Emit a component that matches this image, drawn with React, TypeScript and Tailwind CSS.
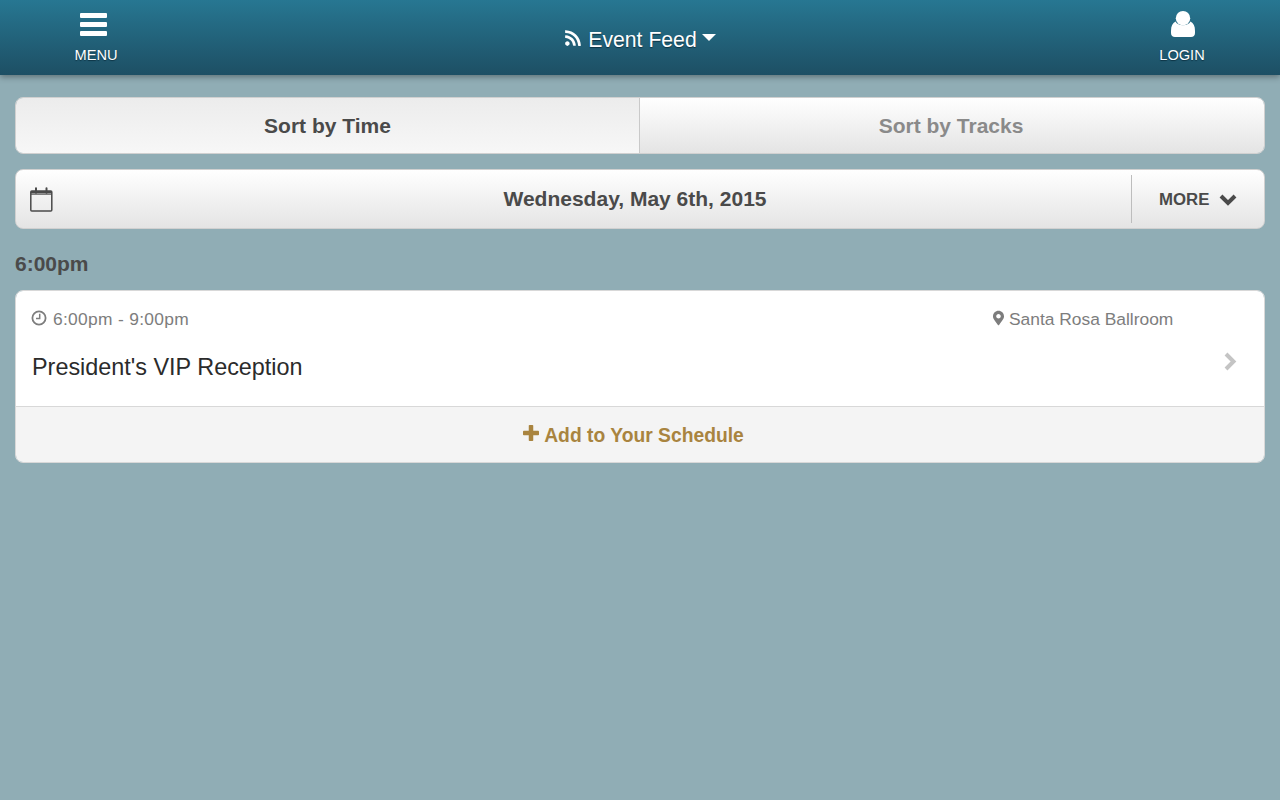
import React from "react";
import { FaRss, FaMapMarkerAlt } from "react-icons/fa";

function BarsIcon() {
  return (
    <svg width="27" height="23" viewBox="0 0 27 23" fill="#fff">
      <rect x="0" y="0" width="27" height="5" rx="1" />
      <rect x="0" y="9" width="27" height="5" rx="1" />
      <rect x="0" y="18" width="27" height="5" rx="1" />
    </svg>
  );
}

function UserIcon() {
  return (
    <svg width="24" height="26" viewBox="0 0 24 26" fill="#fff">
      <circle cx="12" cy="7.2" r="7.2" />
      <path d="M4.5 10.5 C7 15.5 17 15.5 19.5 10.5 C22.5 12 24 15 24 20 V22 C24 24.5 22.5 26 20 26 H4 C1.5 26 0 24.5 0 22 V20 C0 15 1.5 12 4.5 10.5 Z" />
    </svg>
  );
}

function CalendarIcon() {
  return (
    <svg width="23" height="25" viewBox="0 0 23 25" fill="none" stroke="#4a4a4a">
      <rect x="0.8" y="4" width="21" height="20" rx="1" strokeWidth="1.5" />
      <path d="M1 5.2h21" strokeWidth="2.4" />
      <path d="M1 7.2h21" strokeWidth="1" />
      <path d="M6 1.2v4.5M16.5 1.2v4.5" strokeWidth="2" strokeLinecap="round" />
    </svg>
  );
}

function ClockIcon() {
  return (
    <svg width="16" height="16" viewBox="0 0 16 16" fill="none" stroke="#7d7d7d">
      <circle cx="8" cy="8" r="6.6" strokeWidth="1.8" />
      <path d="M8.7 3.8v4.7H5" strokeWidth="1.5" />
    </svg>
  );
}

function ChevronDown() {
  return (
    <svg width="18" height="13" viewBox="0 0 18 13" fill="none" stroke="#4a4a4a">
      <path d="M2 3 L9 10 L16 3" strokeWidth="4" />
    </svg>
  );
}

function ChevronRight() {
  return (
    <svg width="14" height="19" viewBox="0 0 14 19" fill="none" stroke="#c4c4c4">
      <path d="M3 2 L10.5 9.5 L3 17" strokeWidth="4" />
    </svg>
  );
}

function PlusIcon() {
  return (
    <svg width="16" height="16" viewBox="0 0 16 16" fill="#a9843f">
      <rect x="5.75" y="0" width="4.5" height="16" rx="0.8" />
      <rect x="0" y="5.75" width="16" height="4.5" rx="0.8" />
    </svg>
  );
}

export default function App() {
  return (
    <div className="min-h-[800px] bg-[#90adb5] font-['Liberation_Sans',Arial,sans-serif]">
      <header className="h-[75px] flex items-start justify-between bg-gradient-to-b from-[#277792] to-[#1d4f64] shadow-[0_2px_6px_rgba(0,0,0,0.35)] text-white">
        <div className="ml-[56px] w-[80px] flex flex-col items-center pt-[13px]">
          <span className="-ml-[5px] block h-[23px]">
            <BarsIcon />
          </span>
          <span className="text-[14.6px] leading-[16px] mt-[11px] [text-shadow:0_1px_1px_#0d3344]">MENU</span>
        </div>
        <div className="flex items-center pt-[27px] h-[52px] gap-[6px] ml-[2px]">
          <FaRss className="w-[18px] h-[18px] -mt-[4px]" />
          <span className="text-[21.2px] leading-[26px] [text-shadow:0_1px_1px_#0d3344]">Event Feed</span>
          <span className="w-0 h-0 -mt-[4px] -ml-[1px] border-x-[7px] border-x-transparent border-t-[7px] border-t-white" />
        </div>
        <div className="mr-[58px] w-[80px] flex flex-col items-center pt-[11px]">
          <span className="block h-[26px] ml-[3px]">
            <UserIcon />
          </span>
          <span className="text-[14.6px] leading-[16px] mt-[10px] [text-shadow:0_1px_1px_#0d3344]">LOGIN</span>
        </div>
      </header>

      <main className="px-[15px] pt-[22px]">
        <div className="flex h-[57px] rounded-[8px] border border-[#d0d0d0] overflow-hidden">
          <div className="w-[624px] flex items-center justify-center bg-gradient-to-b from-[#ececec] to-[#f7f7f7] border-r border-[#c9c9c9] text-[21px] font-bold text-[#4a4a4a]">
            Sort by Time
          </div>
          <div className="flex-1 flex items-center justify-center pr-[2px] bg-gradient-to-b from-white to-[#e4e4e4] text-[21px] font-bold text-[#8a8a8a]">
            Sort by Tracks
          </div>
        </div>

        <div className="mt-[15px] flex items-center h-[60px] rounded-[8px] border border-[#d0d0d0] bg-gradient-to-b from-white to-[#e4e4e4]">
          <div className="pl-[14px]">
            <CalendarIcon />
          </div>
          <div className="flex-1 text-center text-[21px] font-bold text-[#4a4a4a] pl-[86px]">
            Wednesday, May 6th, 2015
          </div>
          <div className="w-[133px] h-[48px] border-l border-[#bdbdbd] flex items-center pl-[27px] gap-[10px] text-[#4a4a4a]">
            <span className="text-[16.8px] font-bold leading-[20px] mt-[1px]">MORE</span>
            <ChevronDown />
          </div>
        </div>

        <div className="mt-[22px] text-[21px] leading-[26px] font-bold text-[#4a4a4a]">6:00pm</div>

        <div className="mt-[13px] rounded-[8px] border border-[#d8d8d8] overflow-hidden">
          <div className="relative h-[115px] bg-white">
            <div className="absolute top-[18px] left-[15px] flex items-center h-[20px] gap-[6px] text-[17.4px] tracking-[0.3px] text-[#7d7d7d]">
              <span className="-mt-[3px]">
                <ClockIcon />
              </span>
              <span>6:00pm - 9:00pm</span>
            </div>
            <div className="absolute top-[18px] left-[977px] flex items-center h-[20px] gap-[5px] text-[17.4px] text-[#7d7d7d]">
              <FaMapMarkerAlt className="w-[11px] h-[16px] -mt-[3px]" />
              <span>Santa Rosa Ballroom</span>
            </div>
            <div className="absolute top-[61px] left-[16px] text-[23.4px] leading-[30px] text-[#2b2b2b]">
              President's VIP Reception
            </div>
            <span className="absolute top-[61px] left-[1207px] block">
              <ChevronRight />
            </span>
          </div>
          <div className="h-[56px] bg-[#f4f4f4] border-t border-[#d8d8d8] flex items-center justify-center gap-[5px] pr-[13px] pt-[4px] text-[#a9843f]">
            <span className="block -mt-[7px] h-[16px]">
              <PlusIcon />
            </span>
            <span className="text-[19.3px] font-bold">Add to Your Schedule</span>
          </div>
        </div>
      </main>
    </div>
  );
}
